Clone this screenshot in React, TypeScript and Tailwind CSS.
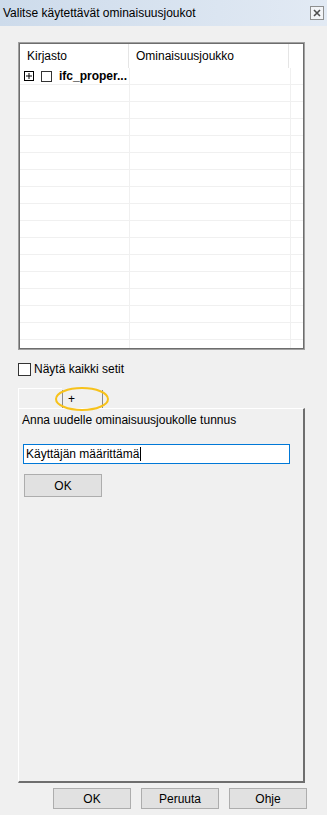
import React from "react";

const font = { fontFamily: '"Liberation Sans", Arial, sans-serif' };

function Btn({ label, className = "" }: { label: string; className?: string }) {
  return (
    <div
      className={`flex items-center justify-center border border-[#adadad] bg-[#e1e1e1] text-[12px] text-black ${className}`}
    >
      {label}
    </div>
  );
}

export default function App() {
  const rows = Array.from({ length: 17 }, (_, i) => i);

  return (
    <div className="relative h-[815px] w-[327px] overflow-hidden bg-[#f0f0f0] text-black" style={font}>
      {/* title bar */}
      <div className="flex h-[26px] items-center justify-between bg-gradient-to-r from-[#cddbeb] to-[#e2eaf4] pl-[3px] pr-[3px]">
        <span className="text-[12px] leading-none text-black">Valitse käytettävät ominaisuusjoukot</span>
        <div className="flex h-[14px] w-[14px] items-center justify-center border border-[#8e8f8f] bg-[#f2f4f7]">
          <svg width="8" height="8" viewBox="0 0 8 8">
            <path d="M1 1 L7 7 M7 1 L1 7" stroke="#4d4d4d" strokeWidth="1.6" />
          </svg>
        </div>
      </div>

      {/* grid */}
      <div className="ml-[18px] mt-[16px] h-[308px] w-[287px] border border-[#a0a0a0]">
        <div className="h-full w-full overflow-hidden border border-[#6d6d6d] bg-white">
          <div className="flex h-[24px] text-[12px]">
            <div className="flex w-[109px] items-center border-r border-[#e5e5e5] pl-[7px]">Kirjasto</div>
            <div className="flex w-[160px] items-center border-r border-[#e5e5e5] pl-[7px]">Ominaisuusjoukko</div>
            <div className="flex-1" />
          </div>
          {rows.map((i) => (
            <div key={i} className="flex h-[17px] border-b border-[#f0f0f0] text-[12px]">
              <div className="flex w-[110px] items-center border-r border-[#f0f0f0]">
                {i === 0 && (
                  <>
                    <div className="ml-[4px] flex h-[10px] w-[10px] items-center justify-center border border-black">
                      <svg width="8" height="8" viewBox="0 0 8 8">
                        <path d="M1 4 H7 M4 1 V7" stroke="#000" strokeWidth="1" />
                      </svg>
                    </div>
                    <div className="ml-[7px] h-[11px] w-[11px] border border-[#333]" />
                    <span className="ml-[7px] font-bold">ifc_proper...</span>
                  </>
                )}
              </div>
              <div className="w-[161px] border-r border-[#f0f0f0]" />
              <div className="flex-1" />
            </div>
          ))}
        </div>
      </div>

      {/* show all checkbox */}
      <div className="ml-[18px] mt-[12px] flex h-[14px] items-center">
        <div className="h-[13px] w-[13px] border border-[#333] bg-white" />
        <span className="ml-[3px] text-[12px]">Näytä kaikki setit</span>
      </div>

      {/* tabs */}
      <div className="relative ml-[18px] mt-[12px] flex h-[20px] items-end">
        <div className="h-[20px] w-[44px] border-l border-t border-white bg-[#f0f0f0]" />
        <div className="flex h-[18px] w-[41px] items-center border-l border-r border-[#8a8a8a] pl-[5px] text-[12px]">+</div>
        <svg className="absolute left-[36px] top-[-2px]" width="56" height="26" viewBox="0 0 56 26">
          <ellipse cx="28" cy="13" rx="26" ry="11" fill="none" stroke="#f7c21b" strokeWidth="2" />
        </svg>
      </div>

      {/* tab panel */}
      <div className="ml-[18px] h-[375px] w-[287px] border-l border-t border-white border-r-2 border-b-2 border-r-[#6e6e6e] border-b-[#6e6e6e] pl-[3px] pt-[3px]">
        <div className="text-[12px] leading-[16px]">Anna uudelle ominaisuusjoukolle tunnus</div>
        <div className="ml-[1px] mt-[16px] flex h-[20px] w-[267px] items-center border border-[#0078d7] bg-white pl-[2px] text-[12px]">
          Käyttäjän määrittämä
          <span className="ml-[1px] inline-block h-[14px] w-[1px] bg-black" />
        </div>
        <Btn label="OK" className="ml-[2px] mt-[10px] h-[23px] w-[78px]" />
      </div>

      {/* bottom buttons */}
      <div className="ml-[53px] mt-[5px] flex gap-[10px]">
        <Btn label="OK" className="h-[21px] w-[78px]" />
        <Btn label="Peruuta" className="h-[21px] w-[78px]" />
        <Btn label="Ohje" className="h-[21px] w-[78px]" />
      </div>
    </div>
  );
}
